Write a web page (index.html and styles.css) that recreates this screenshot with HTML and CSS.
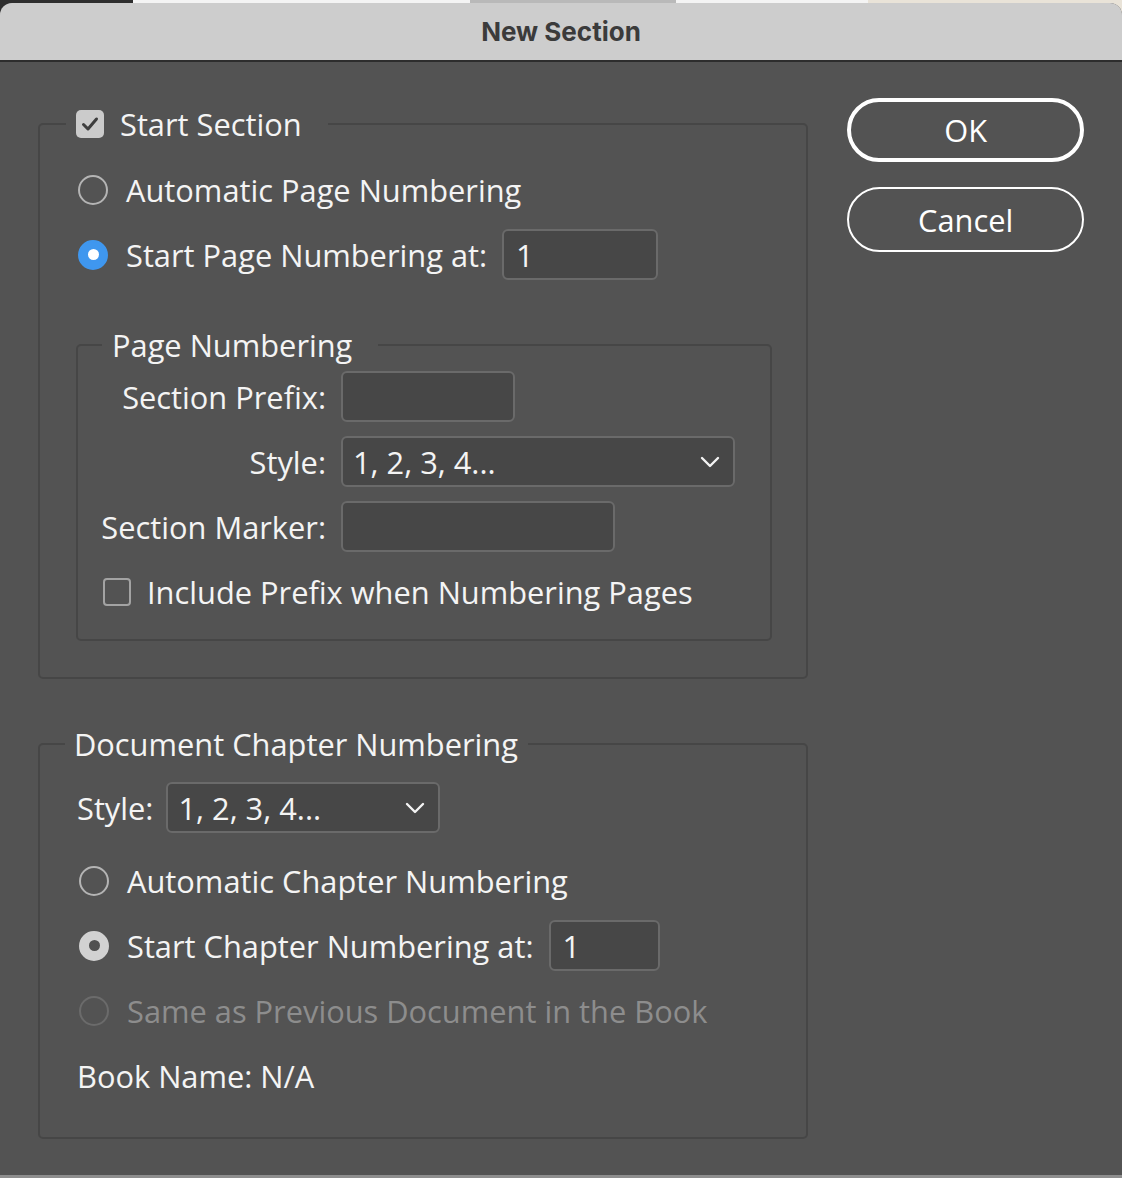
FILE: index.html
```html
<!DOCTYPE html>
<html lang="en">
<head>
    <meta charset="UTF-8">
    <meta name="viewport" content="width=device-width, initial-scale=1.0">
    <title>New Section</title>
    <link rel="stylesheet" href="styles.css">
</head>
<body>
    <div class="window">
        <div class="titlebar">New Section</div>
        <div class="dialog">
            <div class="main">
                <fieldset class="group section-group">
                    <legend>
                        <span class="checkbox checked">
                            <svg width="28" height="28" viewBox="0 0 28 28"><path d="M7.5 14.5 L12 19 L20.5 9" fill="none" stroke="#3e3e3e" stroke-width="3" stroke-linecap="round" stroke-linejoin="round"/></svg>
                        </span>
                        Start Section
                    </legend>
                    <div class="group-body">
                        <div class="option"><span class="radio"></span>Automatic Page Numbering</div>
                        <div class="option"><span class="radio selected-blue"></span>Start Page Numbering at:<span class="field page-start">1</span></div>

                        <fieldset class="group inner-group">
                            <legend>Page Numbering</legend>
                            <div class="form-grid">
                                <span class="label">Section Prefix:</span>
                                <span class="field prefix"></span>
                                <span class="label">Style:</span>
                                <span class="field select wide">1, 2, 3, 4...
                                    <svg class="chevron" width="20" height="12" viewBox="0 0 20 12"><path d="M2 2 L10 10 L18 2" fill="none" stroke="#f4f4f4" stroke-width="2.4" stroke-linecap="round" stroke-linejoin="round"/></svg>
                                </span>
                                <span class="label">Section Marker:</span>
                                <span class="field marker"></span>
                                <div class="check-row"><span class="checkbox"></span>Include Prefix when Numbering Pages</div>
                            </div>
                        </fieldset>
                    </div>
                </fieldset>

                <fieldset class="group chapter-group">
                    <legend>Document Chapter Numbering</legend>
                    <div class="group-body">
                        <div class="style-row">
                            Style:
                            <span class="field select narrow">1, 2, 3, 4...
                                <svg class="chevron" width="20" height="12" viewBox="0 0 20 12"><path d="M2 2 L10 10 L18 2" fill="none" stroke="#f4f4f4" stroke-width="2.4" stroke-linecap="round" stroke-linejoin="round"/></svg>
                            </span>
                        </div>
                        <div class="option"><span class="radio"></span>Automatic Chapter Numbering</div>
                        <div class="option"><span class="radio selected-grey"></span>Start Chapter Numbering at:<span class="field chapter-start">1</span></div>
                        <div class="option disabled"><span class="radio"></span>Same as Previous Document in the Book</div>
                        <div class="option">Book Name: N/A</div>
                    </div>
                </fieldset>
            </div>

            <div class="buttons">
                <div class="button default">OK</div>
                <div class="button">Cancel</div>
            </div>
        </div>
    </div>
</body>
</html>
```

FILE: styles.css
```css
body {
    margin: 0;
    font-family: "Open Sans", "Noto Sans", sans-serif;
    font-size: 30.8px;
    color: #f4f4f4;
    background: #8e8e8e linear-gradient(to right, #2e2e2e 0 133px, #f4f4f4 133px 470px, #b9b9b9 470px 676px, #f4f4f4 676px 868px, #e9e3d8 868px) no-repeat top left / 100% 16px;
}
.window {
    margin-top: 3px;
    height: 1172px;
    background: #535353;
    border-radius: 12px 12px 0 0;
    overflow: hidden;
}
.titlebar {
    height: 57px;
    line-height: 57px;
    background: #cdcdcd;
    border-bottom: 2px solid #2d2d2d;
    text-align: center;
    font-family: Inter, "Liberation Sans", sans-serif;
    font-weight: 700;
    font-size: 26px;
    color: #3b3b3b;
}
.dialog {
    display: flex;
    align-items: flex-start;
    gap: 39px;
    padding: 36px 38px 0;
}
.main {
    width: 771px;
    margin-top: 6px;
}

/* groups */
.group {
    margin: 0;
    padding: 0;
    border: 2px solid #464646;
    border-radius: 5px;
    min-width: 0;
}
.group legend {
    display: flex;
    align-items: center;
    height: 40px;
    padding: 0 10px 0 9px;
    margin-left: 25px;
}
.section-group legend {
    gap: 16px;
    padding: 0 26px 0 10px;
    margin-left: 26px;
}
.inner-group legend {
    margin-left: 24px;
}
.group-body {
    padding: 20px 34px 36px 36px;
}
.inner-group {
    margin-top: 45px;
}
.chapter-group {
    margin-top: 45px;
}
.chapter-group .group-body {
    padding: 18px 34px 36px 37px;
}

/* rows */
.option {
    display: flex;
    align-items: center;
    height: 51px;
    white-space: nowrap;
}
.option + .option {
    margin-top: 14px;
}
.option.disabled {
    color: #8d8d8d;
}
.style-row {
    display: flex;
    align-items: center;
    gap: 13px;
    height: 51px;
    margin-bottom: 22px;
}

/* radios and checks */
.radio {
    flex: none;
    display: flex;
    align-items: center;
    justify-content: center;
    width: 30px;
    height: 30px;
    box-sizing: border-box;
    border: 2px solid #b4b4b4;
    border-radius: 50%;
    margin: 0 18px 0 2px;
}
.radio.selected-blue {
    background: #3f97ef;
    border-color: #3f97ef;
}
.radio.selected-blue::after {
    content: "";
    width: 11px;
    height: 11px;
    border-radius: 50%;
    background: #fff;
}
.radio.selected-grey {
    background: #d2d2d2;
    border-color: #d2d2d2;
}
.radio.selected-grey::after {
    content: "";
    width: 11px;
    height: 11px;
    border-radius: 50%;
    background: #505050;
}
.disabled .radio {
    border-color: #6b6b6b;
}
.checkbox {
    flex: none;
    display: block;
    width: 28px;
    height: 28px;
    box-sizing: border-box;
    border: 2px solid #a3a3a3;
    border-radius: 4px;
}
.checkbox.checked {
    background: #cbcbcb;
    border: none;
    border-radius: 5px;
}
.checkbox svg {
    display: block;
}

/* fields */
.field {
    display: flex;
    align-items: center;
    height: 51px;
    box-sizing: border-box;
    background: #474747;
    border: 2px solid #6a6a6a;
    border-radius: 6px;
    padding: 0 12px;
}
.page-start {
    width: 156px;
    margin-left: 15px;
}
.chapter-start {
    width: 111px;
    margin-left: 15px;
}
.select {
    justify-content: space-between;
    padding: 0 13px 0 10px;
}
.select.wide {
    width: 394px;
}
.select.narrow {
    width: 274px;
}
.prefix {
    width: 174px;
}
.marker {
    width: 274px;
}

/* page numbering grid */
.form-grid {
    display: grid;
    grid-template-columns: 248px 1fr;
    column-gap: 15px;
    row-gap: 14px;
    padding: 6px 0 22px;
}
.form-grid .label {
    display: flex;
    align-items: center;
    justify-content: flex-end;
    height: 51px;
}
.check-row {
    grid-column: 1 / -1;
    display: flex;
    align-items: center;
    gap: 16px;
    height: 51px;
    padding-left: 25px;
}

/* buttons */
.buttons {
    width: 237px;
}
.button {
    display: flex;
    align-items: center;
    justify-content: center;
    height: 65px;
    box-sizing: border-box;
    border: 2px solid #fff;
    border-radius: 34px;
    color: #fff;
}
.button.default {
    height: 64px;
    border-width: 4px;
    margin-bottom: 25px;
}
```
